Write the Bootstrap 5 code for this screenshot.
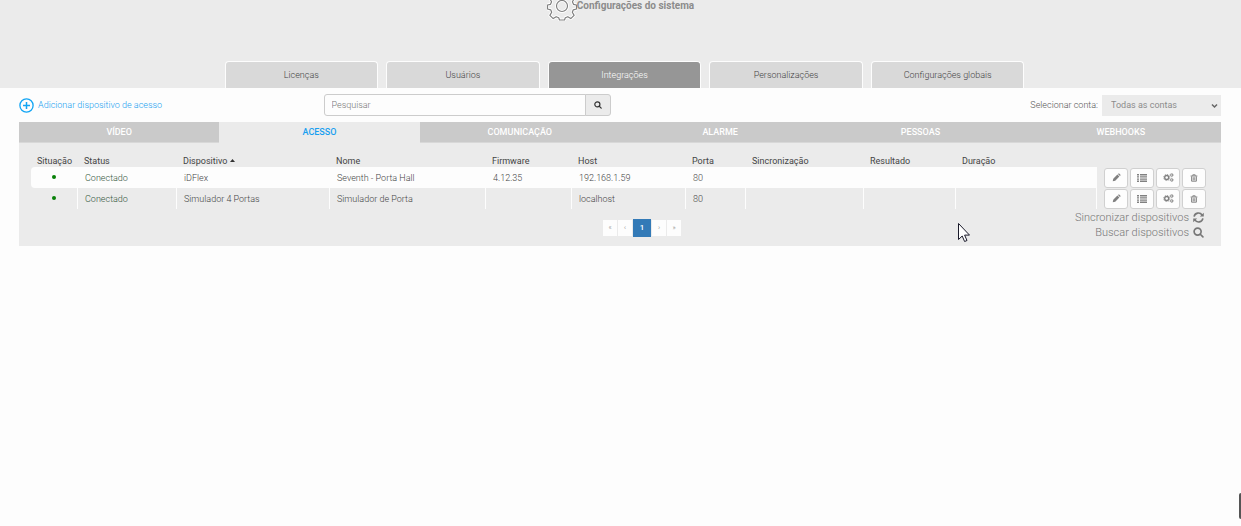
<!DOCTYPE html>
<html lang="pt-BR">
<head>
<meta charset="utf-8">
<meta name="viewport" content="width=device-width, initial-scale=1">
<title>Configurações do sistema</title>
<link href="https://cdn.jsdelivr.net/npm/bootstrap@5.3.0/dist/css/bootstrap.min.css" rel="stylesheet">
<style>
body{font:300 9px/12px Roboto,"Liberation Sans",sans-serif;color:#444;background:#fdfdfd;min-height:100vh;overflow:hidden}
a{text-decoration:none}
.top-band{background:#ebebeb;height:88px}
.page-title{font-size:10px;line-height:12px;color:#8c8c8c;font-weight:700}
.page-title svg{margin-top:-9px}
.main-tabs{width:800px;max-width:100%;gap:8px;margin-left:8px}
.main-tabs .nav-link{background:#d9d9d9;color:#444;border:1px solid #fdfdfd;border-bottom:0;border-radius:4px 4px 0 0;padding:7px 4px;line-height:12px}
.main-tabs .nav-link.active{background:#969696;color:#fff}
.page-body{padding:0 20px 0 19px}
.tool-row{height:34px}
.add-link{color:#199ff0}
.search-group{width:287px}
.search-group .form-control{font-size:9px;line-height:12px;font-weight:300;padding:4px 7px;min-height:22px;height:22px;border-color:#ccc;border-radius:3px 0 0 3px;background:#fdfdfd}
.search-group .form-control::placeholder{color:#777}
.search-group .btn{padding:0;width:26px;background:#ebebeb;border-color:#ccc;border-radius:0 3px 3px 0;color:#333;line-height:10px}
.conta-label{color:#555}
.conta{width:119px;height:21px;font-size:9px;line-height:12px;font-weight:400;padding:4px 16px 4px 9px;border:0;border-radius:0;color:#8c8c8c;background-color:#ebebeb;background-image:none}
.conta-caret{position:absolute;right:3px;top:8px;pointer-events:none}
.sub-tabs .nav-link{background:#cacaca;color:#fff;font-weight:500;border-radius:0;padding:4px;line-height:12px;border-bottom:1px solid #d8d8d8}
.sub-tabs .nav-link.active{background:#ebebeb;color:#199ff0;border-color:#ebebeb}
.panel{background:#ebebeb;padding:12px 14px 6px 12px}
.devices{table-layout:fixed;--bs-table-bg:transparent;color:#444;margin:0}
.devices th{font-weight:400;color:#444;padding:0 6px;height:12px;border:0;white-space:nowrap}
.devices td{padding:0 7px;height:21px;border:0;vertical-align:middle;white-space:nowrap}
.devices td.ok{color:#34563c}
.devices tr.sel td:not(.acts){background:#fdfdfd}
.devices tr.sel td:first-child{border-radius:4px 0 0 4px}
.devices tr.alt td:not(.acts){box-shadow:inset -1px 0 #fdfdfd}
.dot{width:4px;height:4px;background:#078007;border-radius:50%}
.devices td.dot-cell{padding:0 9px 2px 7px}
.devices td.acts{padding:0 0 0 7px}
.acts .btn{width:24px;height:20px;padding:0;background:#fdfdfd;border:1px solid #d0d0d0;border-radius:3px;color:#808080}
.acts .d-flex{gap:2px}
.pager{--bs-pagination-font-size:7px;gap:1px;margin:11px 0 0 46px}
.pager .page-item .page-link{width:14px;height:16px;padding:0;line-height:16px;text-align:center;color:#888;border:0;background:#fdfdfd;border-radius:0;margin:0}
.pager .page-item.active .page-link{background:#337ab7;color:#fff;font-size:8px;font-weight:500;width:18px;height:18px;line-height:18px;margin-top:-1px}
.foot{display:grid;grid-template-columns:1fr auto 1fr}
.foot-links{font-size:11px;line-height:15px;padding:1px 3px 0 0}
.foot-links a{color:#777;gap:4px}
.pointer{position:absolute;left:957px;top:222px}
.edge-grip{position:absolute;right:0;top:493px;width:2px;height:26px;background:#555;border-radius:2px 0 0 2px}
</style>
</head>
<body class="position-relative">
<svg class="d-none" xmlns="http://www.w3.org/2000/svg">
<symbol id="pencil" viewBox="0 0 10 10"><path fill="currentColor" d="M.8 9.200l.6-2.800L6 1.800l2.200 2.200-4.600 4.600zM6.600 1.200l.6-.6q.4-.3.8 0l1.400 1.400q.3.4 0 .8l-.6.6z"/></symbol>
<symbol id="list" viewBox="0 0 10 8"><path fill="currentColor" d="M0 0h2v1.400H0zM3 0h7v1.400H3zM0 2.200h2v1.400H0zM3 2.200h7v1.400H3zM0 4.400h2v1.400H0zM3 4.400h7v1.400H3zM0 6.600h2V8H0zM3 6.600h7V8H3z"/></symbol>
<symbol id="cogs" viewBox="0 0 12 10"><g fill="none" stroke="currentColor"><circle cx="4" cy="5" r="2.200" stroke-width="1.500"/><circle cx="4" cy="5" r="3.400" stroke-width=".9" stroke-dasharray="1.330 1.330"/><circle cx="9.500" cy="2.300" r="1.200" stroke-width="1"/><circle cx="9.500" cy="7.700" r="1.200" stroke-width="1"/><circle cx="9.500" cy="2.300" r="1.900" stroke-width=".6" stroke-dasharray=".7 .7"/><circle cx="9.500" cy="7.700" r="1.900" stroke-width=".6" stroke-dasharray=".7 .7"/></g></symbol>
<symbol id="trash" viewBox="0 0 10 10"><path fill="none" stroke="currentColor" stroke-width="1.200" d="M.8 2.500h8.400M3.500 2.300V1h3v1.300M2 3v6h6V3M4 4v4M6 4v4"/></symbol>
<symbol id="search" viewBox="0 0 10 10"><g fill="none" stroke="currentColor" stroke-width="1.500"><circle cx="4.200" cy="4.200" r="3.200"/><path stroke-linecap="round" d="M6.600 6.600L9 9"/></g></symbol>
<symbol id="sync" viewBox="0 0 10 10"><path fill="none" stroke="currentColor" stroke-width="1.500" d="M1 4.200A4 4 0 0 1 8.300 2.800M9 5.800A4 4 0 0 1 1.700 7.200"/><path fill="currentColor" d="M9.800.6v3.600H6.200zM.2 9.400V5.800h3.600z"/></symbol>
</svg>
<header class="top-band d-flex flex-column align-items-center justify-content-between">
<h1 class="page-title d-flex m-0"><svg width="30" height="30" viewBox="-15 -15 30 30" fill="none" stroke-linejoin="round" aria-hidden="true"><path d="M-2.500-13.500h5l.8 3.600 2.500 1 3.200-2 3.400 3.400-2 3.200 1.100 2.600 3 .7v4l-3.200.8-1 2.500 1.800 3.100-3.300 3.200-3-1.900-2.500 1-.8 2.300h-5l-.8-2.300-2.500-1-3 1.900-3.300-3.200 1.800-3.100-1-2.500-3.200-.8v-4l3-.7 1.100-2.600-2-3.200 3.400-3.400 3.200 2 2.500-1z" stroke="#fff" stroke-width="3"/><path d="M-2.500-13.500h5l.8 3.600 2.500 1 3.200-2 3.400 3.400-2 3.200 1.100 2.600 3 .7v4l-3.200.8-1 2.500 1.800 3.100-3.300 3.200-3-1.900-2.500 1-.8 2.300h-5l-.8-2.300-2.500-1-3 1.900-3.300-3.200 1.800-3.100-1-2.500-3.200-.8v-4l3-.7 1.100-2.600-2-3.200 3.400-3.400 3.200 2 2.500-1z" stroke="#808080" stroke-width="1.200"/><circle r="5.500" stroke="#fff" stroke-width="3"/><circle r="5.500" stroke="#808080" stroke-width="1.200"/></svg><span>Configurações do sistema</span></h1>
<nav class="main-tabs nav nav-justified flex-nowrap">
<a class="nav-link" href="#">Licenças</a><a class="nav-link" href="#">Usuários</a><a class="nav-link active" href="#">Integrações</a><a class="nav-link" href="#">Personalizações</a><a class="nav-link" href="#">Configurações globais</a>
</nav>
</header>
<main class="page-body">
<div class="tool-row row g-0 align-items-center">
<div class="col-3"><a class="add-link d-flex align-items-center gap-1" href="#"><svg width="15" height="15" viewBox="0 0 15 15" fill="none" stroke="#12a5f4" aria-hidden="true"><circle cx="7.500" cy="7.500" r="6.600" stroke-width="1.300"/><path stroke-width="1.500" d="M7.500 4v7M4 7.500h7"/></svg><span>Adicionar dispositivo de acesso</span></a></div>
<div class="col-5 ps-1"><div class="search-group input-group"><input class="form-control" type="text" placeholder="Pesquisar" aria-label="Pesquisar"><button class="btn d-flex align-items-center justify-content-center" type="button" aria-label="Buscar"><svg width="8" height="8"><use href="#search"/></svg></button></div></div>
<div class="col-4 d-flex align-items-center justify-content-end"><label for="conta" class="conta-label me-1">Selecionar conta:</label><div class="position-relative"><select id="conta" class="conta form-select"><option>Todas as contas</option></select><svg class="conta-caret" width="7" height="6" viewBox="0 0 7 6" aria-hidden="true"><path d="M1 1.500l2.500 2.500L6 1.500" fill="none" stroke="#666" stroke-width="1.500"/></svg></div></div>
</div>
<nav class="sub-tabs nav nav-justified flex-nowrap">
<a class="nav-link" href="#">VÍDEO</a><a class="nav-link active" href="#">ACESSO</a><a class="nav-link" href="#">COMUNICAÇÃO</a><a class="nav-link" href="#">ALARME</a><a class="nav-link" href="#">PESSOAS</a><a class="nav-link" href="#">WEBHOOKS</a>
</nav>
<section class="panel">
<table class="devices table">
<colgroup><col style="width:47px"><col style="width:99px"><col style="width:153px"><col style="width:156px"><col style="width:86px"><col style="width:114px"><col style="width:60px"><col style="width:118px"><col style="width:92px"><col style="width:141px"><col style="width:110px"></colgroup>
<thead><tr><th>Situação</th><th>Status</th><th>Dispositivo <svg width="5" height="8" viewBox="0 0 5 8"><path d="M0 4l2.500-3L5 4z" fill="#333"/></svg></th><th>Nome</th><th>Firmware</th><th>Host</th><th>Porta</th><th>Sincronização</th><th>Resultado</th><th>Duração</th><th></th></tr></thead>
<tbody>
<tr class="sel"><td class="dot-cell"><div class="dot mx-auto"></div></td><td class="ok">Conectado</td><td>iDFlex</td><td>Seventh - Porta Hall</td><td>4.12.35</td><td>192.168.1.59</td><td>80</td><td></td><td></td><td></td><td class="acts"><div class="d-flex"><button class="btn d-flex align-items-center justify-content-center" aria-label="Editar"><svg width="9" height="9"><use href="#pencil"/></svg></button><button class="btn d-flex align-items-center justify-content-center" aria-label="Lista"><svg width="10" height="8"><use href="#list"/></svg></button><button class="btn d-flex align-items-center justify-content-center" aria-label="Configurar"><svg width="11" height="9"><use href="#cogs"/></svg></button><button class="btn d-flex align-items-center justify-content-center" aria-label="Excluir"><svg width="8" height="8"><use href="#trash"/></svg></button></div></td></tr>
<tr class="alt"><td class="dot-cell"><div class="dot mx-auto"></div></td><td class="ok">Conectado</td><td>Simulador 4 Portas</td><td>Simulador de Porta</td><td></td><td>localhost</td><td>80</td><td></td><td></td><td></td><td class="acts"><div class="d-flex"><button class="btn d-flex align-items-center justify-content-center" aria-label="Editar"><svg width="9" height="9"><use href="#pencil"/></svg></button><button class="btn d-flex align-items-center justify-content-center" aria-label="Lista"><svg width="10" height="8"><use href="#list"/></svg></button><button class="btn d-flex align-items-center justify-content-center" aria-label="Configurar"><svg width="11" height="9"><use href="#cogs"/></svg></button><button class="btn d-flex align-items-center justify-content-center" aria-label="Excluir"><svg width="8" height="8"><use href="#trash"/></svg></button></div></td></tr>
</tbody>
</table>
<div class="foot">
<div></div>
<ul class="pager pagination"><li class="page-item"><a class="page-link" href="#">«</a></li><li class="page-item"><a class="page-link" href="#">‹</a></li><li class="page-item active"><a class="page-link" href="#">1</a></li><li class="page-item"><a class="page-link" href="#">›</a></li><li class="page-item"><a class="page-link" href="#">»</a></li></ul>
<div class="foot-links d-flex flex-column align-items-end"><a class="d-flex align-items-center" href="#">Sincronizar dispositivos<svg width="11" height="11"><use href="#sync"/></svg></a><a class="d-flex align-items-center" href="#">Buscar dispositivos<svg width="11" height="11"><use href="#search"/></svg></a></div>
</div>
</section>
</main>
<svg class="pointer" width="13" height="21" viewBox="0 0 13 21" aria-hidden="true"><path d="M1.500 1.500v16l3.700-3.500 2.400 5.500 2.400-1-2.400-5.400h4.900z" fill="#fff" stroke="#1a1a2a"/></svg>
<div class="edge-grip"></div>
<script src="https://cdn.jsdelivr.net/npm/bootstrap@5.3.0/dist/js/bootstrap.bundle.min.js"></script>
</body>
</html>
